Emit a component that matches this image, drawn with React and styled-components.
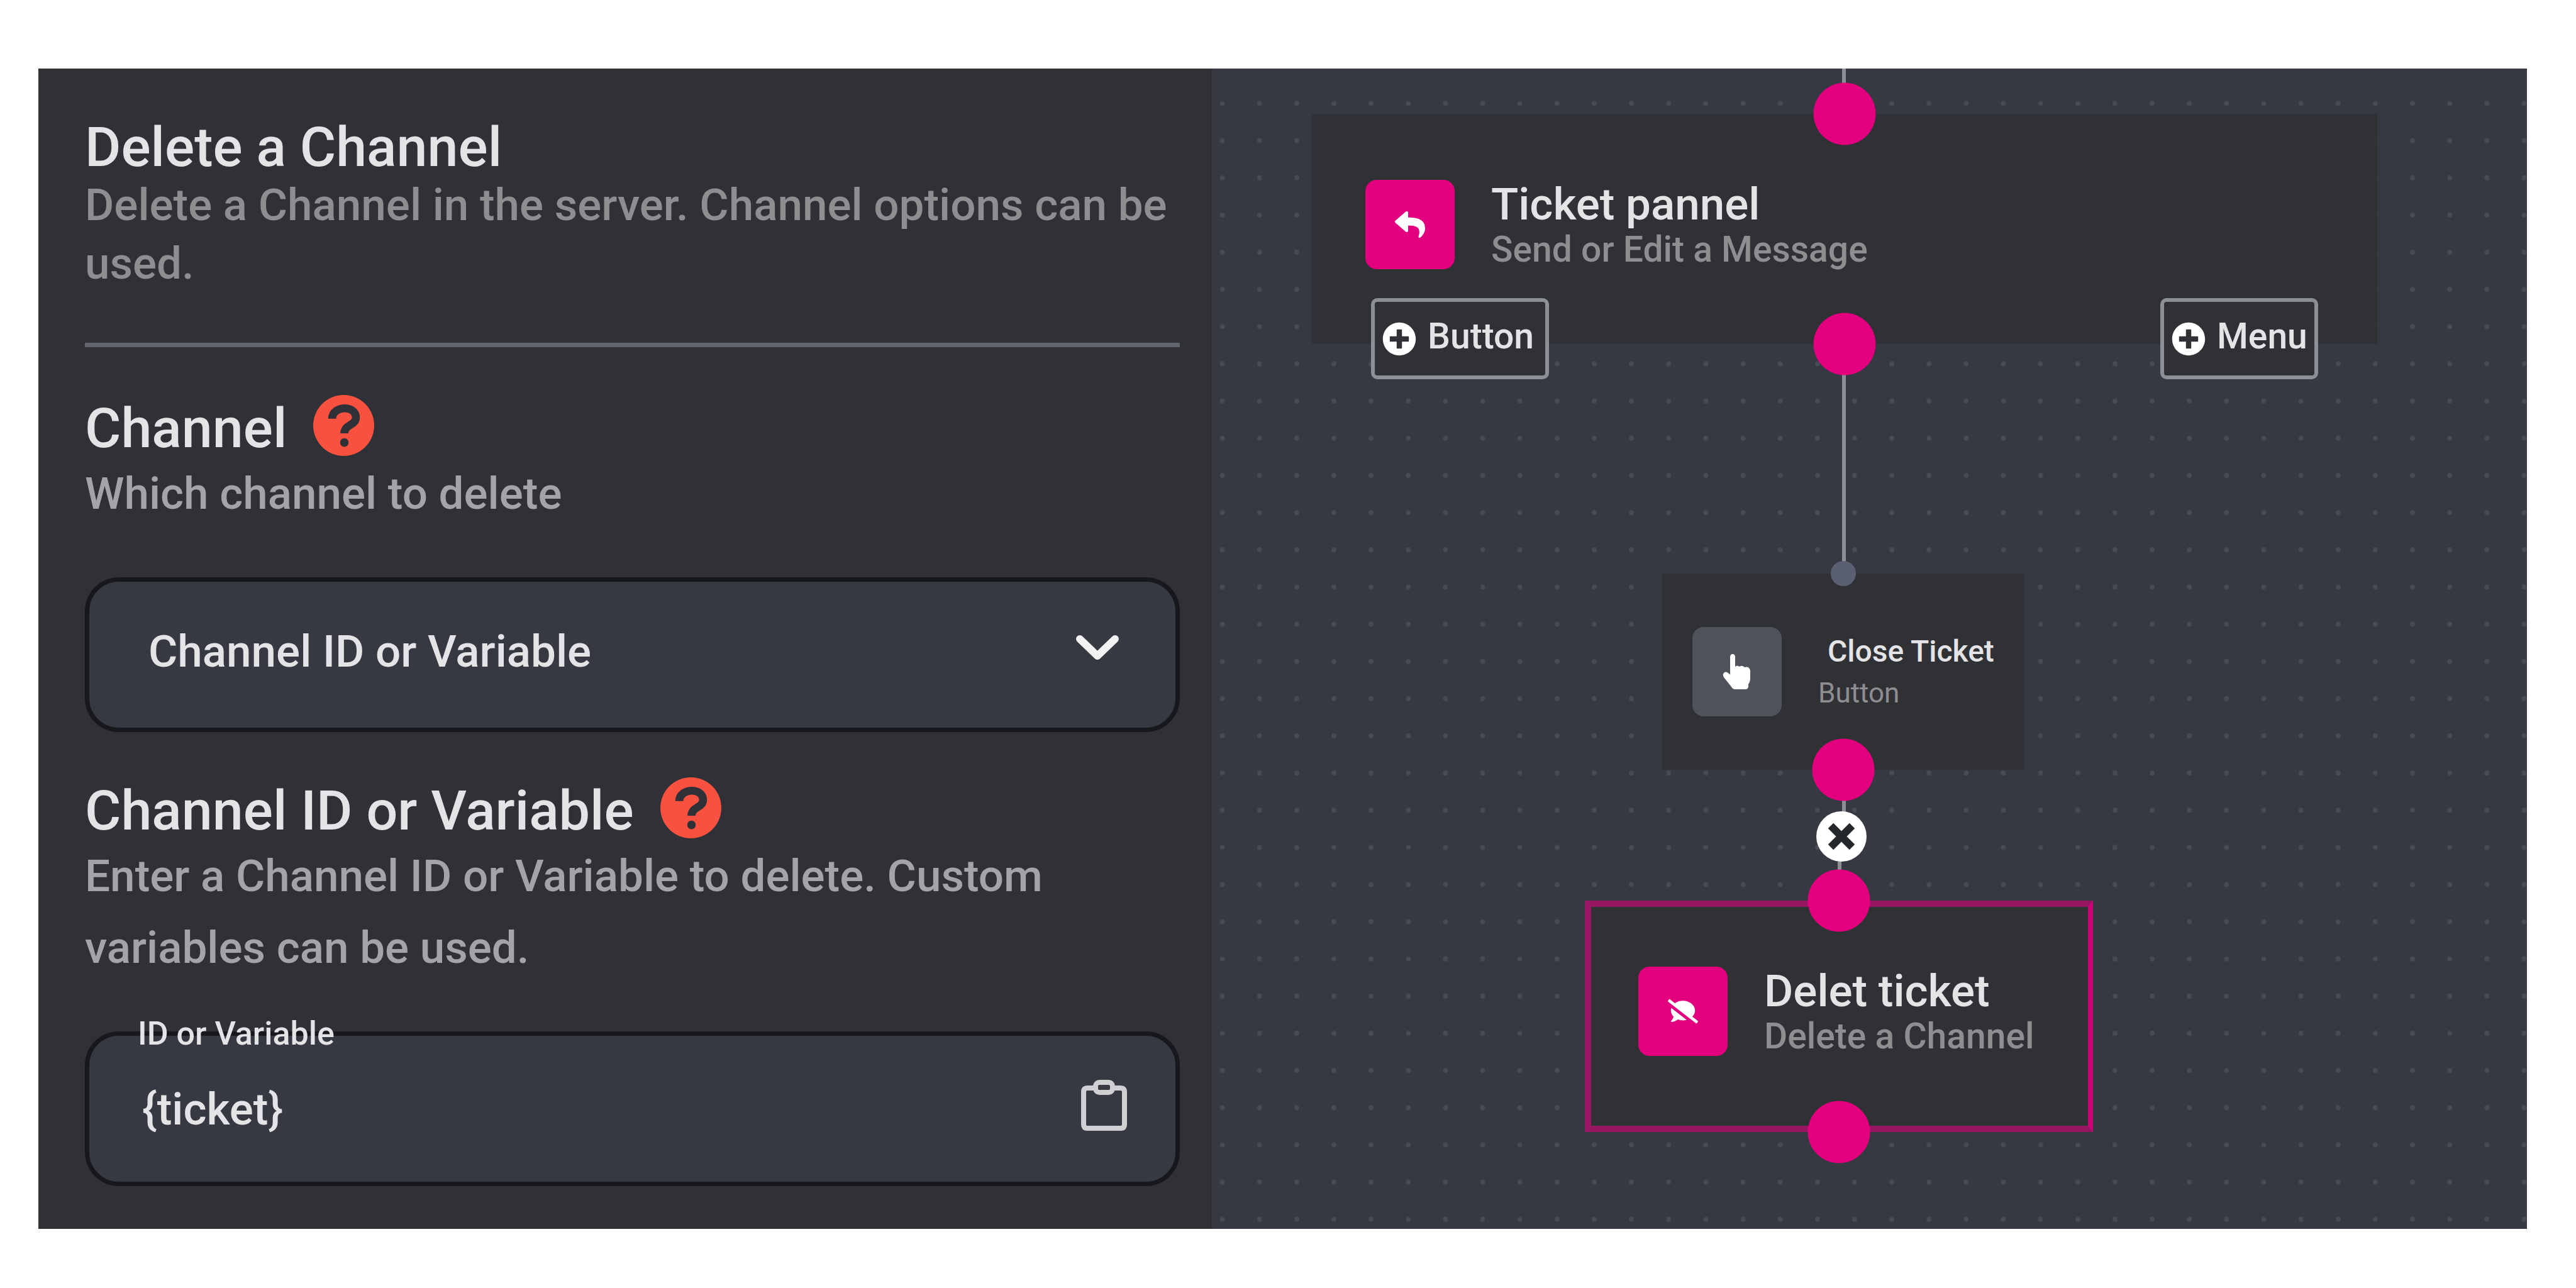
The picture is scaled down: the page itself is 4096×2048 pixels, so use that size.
import React, { useState } from "react";
import styled, { createGlobalStyle } from "styled-components";
import { FaReply, FaCommentSlash, FaPlusCircle } from "react-icons/fa";

const color = {
  panel: "#303136",
  canvas: "#363941",
  node: "#303135",
  dot: "#484b54",
  pink: "#e3007e",
  red: "#f9513f",
  text: "#e4e4e6",
  muted: "#8e8e91",
  soft: "#a3a4a7",
  line: "#63656c",
  edge: "#8c8f95",
  fieldBorder: "#17181b",
};

const GlobalStyle = createGlobalStyle`
  *, *::before, *::after { box-sizing: border-box; }
  body {
    margin: 0;
    background: #fff;
    color: ${color.text};
    font-family: Roboto, "Liberation Sans", sans-serif;
    font-weight: 500;
  }
  button, input, select { font: inherit; color: inherit; }
  h1, h2, p { margin: 0; }
`;

const Page = styled.div`
  display: flex;
  min-height: 100vh;
  padding: 109px 78px 94px 61px;
`;

const Builder = styled.main`
  flex: 1;
  display: grid;
  grid-template-columns: 1866fr 2091fr;
`;

/* ---------- Settings sidebar ---------- */

const Sidebar = styled.aside`
  background: ${color.panel};
  padding: 79px 51px 64px 74px;
  min-width: 0;
`;

const Title = styled.h1`
  font-size: 88px;
  line-height: 91px;
  font-weight: 500;
`;

const Summary = styled.p`
  font-size: 71px;
  line-height: 93px;
  color: ${color.muted};
`;

const Divider = styled.hr`
  height: 7px;
  margin: 80px 0 76px;
  border: 0;
  background: ${color.line};
`;

const Field = styled.section`
  & + & {
    margin-top: 72px;
  }
`;

const FieldHead = styled.div`
  display: flex;
  align-items: flex-end;
  gap: 42px;
  height: 97px;
`;

const FieldLabel = styled.label`
  font-size: 88px;
  line-height: 89px;
`;

const HelpButton = styled.button`
  display: flex;
  padding: 0;
  border: 0;
  background: none;
`;

const Hint = styled.p`
  margin-top: 3px;
  font-size: 71px;
  line-height: 114px;
  color: ${color.soft};
`;

const Control = styled.div`
  position: relative;
  display: grid;
  margin-top: 76px;
`;

const Select = styled.select`
  appearance: none;
  height: 246px;
  padding: 0 200px 12px 94px;
  border: 7px solid ${color.fieldBorder};
  border-radius: 54px;
  background: ${color.canvas};
  font-size: 71px;
`;

const Input = styled.input`
  width: 100%;
  height: 246px;
  padding: 0 200px 0 84px;
  border: 7px solid ${color.fieldBorder};
  border-radius: 54px;
  background: ${color.canvas};
  font-size: 71px;
`;

const Chevron = styled.svg`
  position: absolute;
  right: 95px;
  top: 88px;
  width: 72px;
  height: 48px;
  pointer-events: none;
`;

const FloatingLabel = styled.label`
  position: absolute;
  left: 84px;
  top: -22px;
  font-size: 52px;
  line-height: 52px;
`;

const PasteButton = styled.button`
  position: absolute;
  right: 84px;
  top: 76px;
  display: flex;
  padding: 0;
  border: 0;
  background: none;
`;

/* ---------- Flow canvas ---------- */

const Canvas = styled.section`
  position: relative;
  overflow: hidden;
  background: ${color.canvas};
`;

const Layer = styled.svg`
  position: absolute;
  inset: 0;
  width: 100%;
  height: 100%;
`;

const Node = styled.article`
  position: absolute;
  left: ${(p) => p.$x}px;
  top: ${(p) => p.$y}px;
  width: ${(p) => p.$w}px;
  height: ${(p) => p.$h}px;
  padding: ${(p) => p.$pad};
  display: flex;
  align-items: flex-start;
  gap: 58px;
  background: ${color.node};
`;

const Selection = styled.span`
  position: absolute;
  inset: 0;
  border: solid;
  border-width: 10px 8px 10px 10px;
  border-color: #951762 #cb0575 #951762 #9b1665;
`;

const NodeIcon = styled.span`
  flex: none;
  display: flex;
  align-items: center;
  justify-content: center;
  width: 142px;
  height: 142px;
  border-radius: 18px;
  background: ${(p) => p.$bg};
  color: #fff;
  font-size: 48px;
`;

const NodeText = styled.div`
  display: flex;
  flex-direction: column;
  justify-content: center;
  height: 142px;
  white-space: nowrap;
`;

const NodeTitle = styled.h2`
  font-size: 71px;
  line-height: 80px;
  font-weight: 500;
`;

const NodeKind = styled.p`
  font-size: 57px;
  line-height: 64px;
  color: ${color.muted};
`;

const SmallTitle = styled.h2`
  padding-left: 15px;
  font-size: 48px;
  line-height: 68px;
  font-weight: 500;
`;

const SmallKind = styled.p`
  font-size: 44px;
  line-height: 64px;
  font-weight: 400;
  color: ${color.muted};
`;

const Handle = styled.span`
  position: absolute;
  left: 50%;
  top: ${(p) => (p.$end === "top" ? "0" : "100%")};
  width: ${(p) => p.$size}px;
  height: ${(p) => p.$size}px;
  border-radius: 50%;
  background: ${(p) => p.$bg};
  transform: translate(-50%, -50%);
`;

const Chips = styled.div`
  position: absolute;
  left: 94px;
  right: 94px;
  top: 293px;
  display: flex;
  justify-content: space-between;
`;

const Chip = styled.button`
  display: flex;
  align-items: center;
  gap: 18px;
  width: ${(p) => p.$w}px;
  height: 129px;
  padding: 0 0 0 12px;
  border: 6px solid ${color.edge};
  border-radius: 10px;
  background: ${color.node};
  font-size: 57px;
  line-height: 64px;

  svg {
    flex: none;
    color: #fff;
    font-size: 54px;
  }
`;

const ChipText = styled.span`
  padding-bottom: 8px;
`;

const RemoveEdge = styled.button`
  position: absolute;
  left: 961px;
  top: 1181px;
  display: flex;
  align-items: center;
  justify-content: center;
  width: 80px;
  height: 80px;
  padding: 0;
  border: 0;
  border-radius: 50%;
  background: #fff;
`;

function HelpIcon() {
  return (
    <svg width="97" height="97" viewBox="0 0 100 100" fill="none">
      <circle cx="50" cy="50" r="50" fill={color.red} />
      <path
        d="M31 39C31 17 70 16 70 37C70 50 51 48 51 63"
        stroke={color.panel}
        strokeWidth="13"
      />
      <circle cx="51" cy="78" r="7" fill={color.panel} />
    </svg>
  );
}

function ClipboardIcon() {
  return (
    <svg width="74" height="84" viewBox="0 0 74 84" fill="none" stroke="#d0d0d3" strokeWidth="8">
      <path d="M22 14H11Q5 14 5 20V72Q5 78 11 78H64Q70 78 70 72V20Q70 14 64 14H53" />
      <rect x="24" y="5" width="27" height="16" rx="6" />
    </svg>
  );
}

function PointerIcon() {
  return (
    <svg width="46" height="56" viewBox="0 0 46 56" fill="#fff">
      <path d="M12 5Q12 0 16 0Q20 0 20 5V20Q23 17 27 20Q31 17 35 21Q42 19 44 26V38Q44 44 41 48V51Q41 56 36 56H20Q16 56 14 52L2 37Q-1 32 3 29Q7 27 12 33Z" />
    </svg>
  );
}

function FieldHeader({ htmlFor, children }) {
  return (
    <FieldHead>
      <FieldLabel htmlFor={htmlFor}>{children}</FieldLabel>
      <HelpButton type="button" aria-label="Help">
        <HelpIcon />
      </HelpButton>
    </FieldHead>
  );
}

function Settings() {
  const [value, setValue] = useState("{ticket}");
  return (
    <Sidebar>
      <Title>Delete a Channel</Title>
      <Summary>Delete a Channel in the server. Channel options can be used.</Summary>
      <Divider />
      <Field>
        <FieldHeader htmlFor="channel">Channel</FieldHeader>
        <Hint>Which channel to delete</Hint>
        <Control>
          <Select id="channel">
            <option>Channel ID or Variable</option>
          </Select>
          <Chevron viewBox="0 0 72 48" fill="none" stroke="#f2f2f2" strokeWidth="12">
            <path d="M8 10L36 37L64 10" strokeLinecap="round" strokeLinejoin="round" />
          </Chevron>
        </Control>
      </Field>
      <Field>
        <FieldHeader htmlFor="variable">Channel ID or Variable</FieldHeader>
        <Hint>Enter a Channel ID or Variable to delete. Custom variables can be used.</Hint>
        <Control>
          <Input id="variable" value={value} onChange={(e) => setValue(e.target.value)} />
          <FloatingLabel htmlFor="variable">ID or Variable</FloatingLabel>
          <PasteButton type="button" aria-label="Paste">
            <ClipboardIcon />
          </PasteButton>
        </Control>
      </Field>
    </Sidebar>
  );
}

function PinkHandle({ end }) {
  return <Handle $end={end} $size={99} $bg={color.pink} />;
}

function Flow() {
  return (
    <Canvas>
      <Layer>
        <defs>
          <pattern
            id="dots"
            width="20"
            height="20"
            patternUnits="userSpaceOnUse"
            patternTransform="translate(-13 26) scale(2.957)"
          >
            <circle cx="10" cy="10" r="1.3" fill={color.dot} />
          </pattern>
        </defs>
        <rect width="100%" height="100%" fill="url(#dots)" />
        <g fill="none" stroke={color.edge} strokeWidth="6">
          <path d="M1005 0V72" />
          <path d="M1005 439V803" />
          <path d="M1005 1115V1180C1005 1225 998 1225 998 1265V1321" />
        </g>
      </Layer>

      <Node $x={159} $y={72} $w={1694} $h={366} $pad="105px 0 0 85px">
        <NodeIcon $bg={color.pink}>
          <FaReply />
        </NodeIcon>
        <NodeText>
          <NodeTitle>Ticket pannel</NodeTitle>
          <NodeKind>Send or Edit a Message</NodeKind>
        </NodeText>
        <Chips>
          <Chip type="button" $w={283}>
            <FaPlusCircle />
            <ChipText>Button</ChipText>
          </Chip>
          <Chip type="button" $w={251}>
            <FaPlusCircle />
            <ChipText>Menu</ChipText>
          </Chip>
        </Chips>
        <PinkHandle end="top" />
        <PinkHandle end="bottom" />
      </Node>

      <Node $x={716} $y={803} $w={576} $h={312} $pad="85px 0 0 48px">
        <NodeIcon $bg="#4e525b">
          <PointerIcon />
        </NodeIcon>
        <NodeText>
          <SmallTitle>Close Ticket</SmallTitle>
          <SmallKind>Button</SmallKind>
        </NodeText>
        <Handle $end="top" $size={40} $bg="#5a6072" />
        <PinkHandle end="bottom" />
      </Node>

      <Node $x={593} $y={1323} $w={808} $h={368} $pad="105px 0 0 85px">
        <Selection />
        <NodeIcon $bg={color.pink}>
          <FaCommentSlash />
        </NodeIcon>
        <NodeText>
          <NodeTitle>Delet ticket</NodeTitle>
          <NodeKind>Delete a Channel</NodeKind>
        </NodeText>
        <PinkHandle end="top" />
        <PinkHandle end="bottom" />
      </Node>

      <RemoveEdge type="button" aria-label="Remove connection">
        <svg width="44" height="44" viewBox="0 0 44 44" stroke="#24272c" strokeWidth="12">
          <path d="M5 5L39 39M39 5L5 39" />
        </svg>
      </RemoveEdge>
    </Canvas>
  );
}

export default function App() {
  return (
    <>
      <GlobalStyle />
      <Page>
        <Builder>
          <Settings />
          <Flow />
        </Builder>
      </Page>
    </>
  );
}
